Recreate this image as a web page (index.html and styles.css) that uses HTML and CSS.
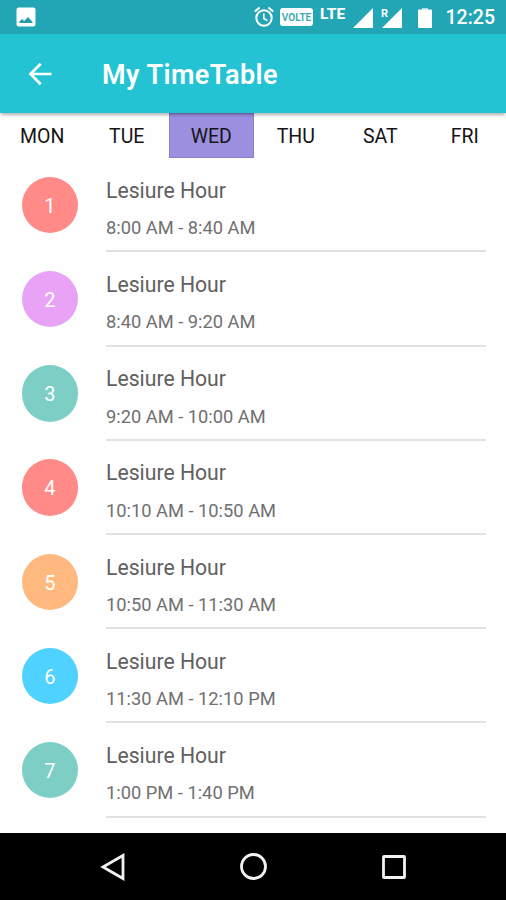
FILE: index.html
```html
<!DOCTYPE html>
<html lang="en">
<head>
<meta charset="utf-8">
<title>My TimeTable</title>
<link rel="stylesheet" href="styles.css">
</head>
<body>
<div class="screen">
  <header class="status">
    <svg class="photo" width="20" height="20" viewBox="0 0 20 20"><rect x=".5" y=".5" width="19" height="19" rx="2.2" fill="#fff"/><path d="M3.500 16v-1.500l2.500-2.500 2.200 2 3.800-4 4.500 5V16z" fill="#229fad"/></svg>
    <svg class="alarm" width="20" height="22" viewBox="0 0 20 22" fill="none" stroke="#fff"><circle cx="10" cy="12" r="7.700" stroke-width="2"/><path d="M.8 5.600 5.600 1.500M19.200 5.600 14.400 1.500" stroke-width="2"/><path d="M9.800 7.500V12.500l3.500 2" stroke-width="1.600"/></svg>
    <span class="volte">VOLTE</span>
    <span class="lte">LTE</span>
    <svg class="signal" width="20" height="20" viewBox="0 0 21 21"><path d="M21 0V21H0z" fill="#fff"/></svg>
    <span class="roaming"><svg width="20" height="20" viewBox="0 0 21 21"><path d="M21 0V21H0z" fill="#fff"/></svg><b>R</b></span>
    <svg class="battery" width="14" height="20" viewBox="0 0 14 20"><path d="M4 0h6v2H4z" fill="#b5e0e5"/><rect y="1.500" width="14" height="18.500" rx="1" fill="#fff"/></svg>
    <time>12:25</time>
  </header>
  <div class="appbar">
    <svg class="back" width="24" height="24" viewBox="0 0 24 24" fill="none" stroke="#fff" stroke-width="2.700"><path d="M12.700 1.700 2.500 12 12.700 22.300M2.500 12H23.500"/></svg>
    <h1>My TimeTable</h1>
  </div>
  <nav class="tabs"><span>MON</span><span>TUE</span><span class="active">WED</span><span>THU</span><span>SAT</span><span>FRI</span></nav>
  <main class="list">
    <section class="row"><span class="num red">1</span><div class="info"><h2>Lesiure Hour</h2><p>8:00 AM - 8:40 AM</p></div></section>
    <section class="row"><span class="num violet">2</span><div class="info"><h2>Lesiure Hour</h2><p>8:40 AM - 9:20 AM</p></div></section>
    <section class="row"><span class="num teal">3</span><div class="info"><h2>Lesiure Hour</h2><p>9:20 AM - 10:00 AM</p></div></section>
    <section class="row"><span class="num red">4</span><div class="info"><h2>Lesiure Hour</h2><p>10:10 AM - 10:50 AM</p></div></section>
    <section class="row"><span class="num orange">5</span><div class="info"><h2>Lesiure Hour</h2><p>10:50 AM - 11:30 AM</p></div></section>
    <section class="row"><span class="num blue">6</span><div class="info"><h2>Lesiure Hour</h2><p>11:30 AM - 12:10 PM</p></div></section>
    <section class="row"><span class="num teal">7</span><div class="info"><h2>Lesiure Hour</h2><p>1:00 PM - 1:40 PM</p></div></section>
  </main>
  <footer class="navbar">
    <svg width="28" height="28" viewBox="0 0 28 28"><path d="M24 2.500v23L4 14z"/></svg>
    <svg width="28" height="28" viewBox="0 0 28 28"><circle cx="13.500" cy="13.500" r="12"/></svg>
    <svg width="28" height="28" viewBox="0 0 28 28"><rect x="3.500" y="3.500" width="21" height="21" rx=".5"/></svg>
  </footer>
</div>
</body>
</html>
```
FILE: styles.css
```css
* { box-sizing: border-box; }
body { margin: 0; font-family: Roboto, sans-serif; }
h1, h2, p { margin: 0; font-weight: 400; }
svg { display: block; flex: none; }
.screen { width: 506px; height: 900px; display: flex; flex-direction: column; background: #fefefe; overflow: hidden; }
.status { height: 34px; flex: none; display: flex; align-items: flex-start; background: #22a6b5; color: #fff; }
.photo { margin: 7px 0 0 16px; }
.alarm { margin: 6px 0 0 217.500px; }
.volte { width: 33px; height: 18px; margin: 8px 0 0 6.500px; border-radius: 3px; background: #fff; color: #3aa7b4; font-size: 10px; font-weight: 600; line-height: 19px; text-align: center; }
.lte { width: 26px; margin: 5px 0 0 7px; font-size: 15.500px; font-weight: 800; line-height: 18px; }
.signal { margin: 8px 0 0 6.500px; }
.roaming { position: relative; margin: 8px 0 0 9.500px; }
.roaming b { position: absolute; left: -1px; top: 0; font-size: 11px; line-height: 11px; }
.battery { margin: 8px 0 0 15.500px; }
time { margin: 6px 0 0 14px; font-size: 19.500px; font-weight: 500; line-height: 24px; white-space: nowrap; }
.appbar { height: 79px; flex: none; display: flex; align-items: center; padding-left: 28px; background: #23c3d3; color: #fff; position: relative; box-shadow: 0 3px 3px -1px rgba(0,0,0,.3); }
h1 { margin: 2px 0 0 50px; font-size: 27px; font-weight: 600; letter-spacing: .45px; line-height: 32px; }
.tabs { height: 45px; flex: none; display: grid; grid-template-columns: repeat(6, 84.500px); grid-template-rows: 45px; font-size: 19.500px; line-height: 47px; text-align: center; color: #151515; }
.active { background: #9c8fe0; box-shadow: inset 0 0 0 1px #8d7fd0; }
.list { height: 675px; flex: none; padding-top: .3px; }
.row { height: 94.200px; display: flex; padding: 18.500px 20px 0 21.500px; }
.num { width: 56.500px; height: 56.500px; border-radius: 50%; color: #fff; font-size: 20px; line-height: 58px; text-align: center; }
.info { flex: 1; margin-left: 28px; border-bottom: 2px solid #e2e2e2; }
h2 { font-size: 21.200px; line-height: 27.500px; color: #606060; }
p { margin-top: 12px; font-size: 18.300px; line-height: 24px; color: #707070; }
.red { background: #ff8a88; }
.violet { background: #e8a3f6; }
.teal { background: #7dcfc5; }
.orange { background: #ffb97e; }
.blue { background: #4fd2ff; }
.navbar { flex: 1; display: flex; justify-content: space-between; align-items: center; padding: 0 98px 0 99px; background: #000; }
.navbar svg { fill: none; stroke: #f2f2f2; stroke-width: 2.800; }
```
